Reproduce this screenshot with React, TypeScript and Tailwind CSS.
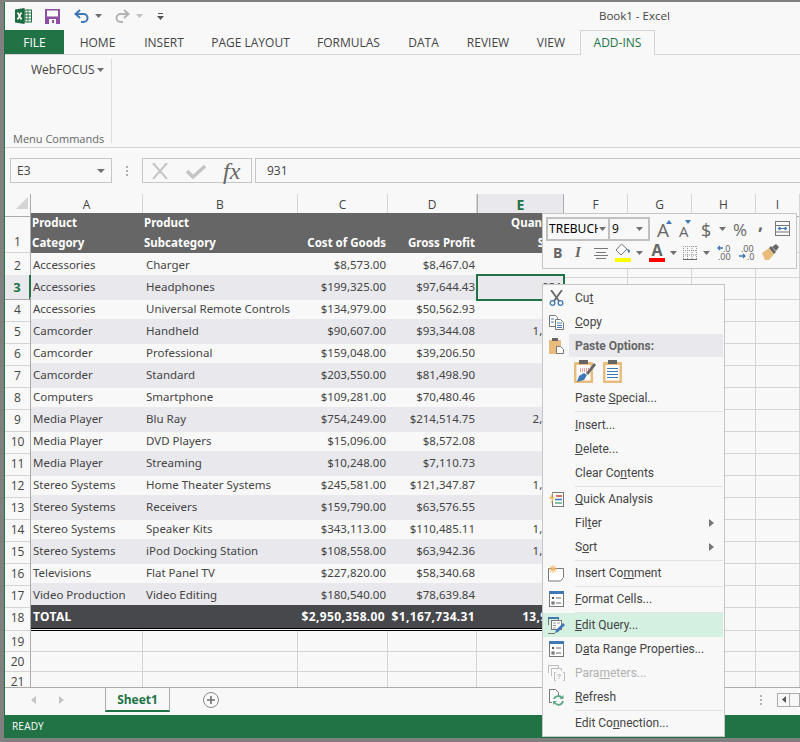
import type { ReactNode } from "react";

const rows = [
  ["Accessories", "Charger", "$8,573.00", "$8,467.04", "854"],
  ["Accessories", "Headphones", "$199,325.00", "$97,644.43", "931"],
  ["Accessories", "Universal Remote Controls", "$134,979.00", "$50,562.93", "768"],
  ["Camcorder", "Handheld", "$90,607.00", "$93,344.08", "1,204"],
  ["Camcorder", "Professional", "$159,048.00", "$39,206.50", "612"],
  ["Camcorder", "Standard", "$203,550.00", "$81,498.90", "845"],
  ["Computers", "Smartphone", "$109,281.00", "$70,480.46", "590"],
  ["Media Player", "Blu Ray", "$754,249.00", "$214,514.75", "2,105"],
  ["Media Player", "DVD Players", "$15,096.00", "$8,572.08", "206"],
  ["Media Player", "Streaming", "$10,248.00", "$7,110.73", "142"],
  ["Stereo Systems", "Home Theater Systems", "$245,581.00", "$121,347.87", "1,032"],
  ["Stereo Systems", "Receivers", "$159,790.00", "$63,576.55", "718"],
  ["Stereo Systems", "Speaker Kits", "$343,113.00", "$110,485.11", "1,127"],
  ["Stereo Systems", "iPod Docking Station", "$108,558.00", "$63,942.36", "1,063"],
  ["Televisions", "Flat Panel TV", "$227,820.00", "$58,340.68", "404"],
  ["Video Production", "Video Editing", "$180,540.00", "$78,639.84", "376"],
];

const COLS = "grid grid-cols-[26px_112px_155px_90px_89px_87px_64px_64px_64px_1fr]";

function Caret({ className = "" }: { className?: string }) {
  return (
    <svg width="7" height="4" viewBox="0 0 7 4" className={className}>
      <path d="M0 0h7L3.500 4z" fill="#707070" />
    </svg>
  );
}

function TitleBar() {
  return (
    <div className="flex h-[28px] items-center">
      <div className="flex w-[594px] items-center">
        <svg width="17" height="16" viewBox="0 0 17 16" className="ml-[10px]">
          <rect x="7" y="2" width="9.500" height="12" fill="#fff" stroke="#217346" />
          <path d="M10 2v12M13 2v12M7 5h9M7 8h9M7 11h9" stroke="#217346" />
          <path d="M0 1.500 9.500 0v16L0 14.500z" fill="#1d6b40" />
          <path d="M2.500 4.500 6.500 11.500M6.500 4.500 2.500 11.500" stroke="#fff" strokeWidth="1.600" />
        </svg>
        <svg width="15" height="15" viewBox="0 0 15 15" className="ml-[13px]">
          <rect width="15" height="15" fill="#8d4ea3" />
          <rect x="2" y="1.500" width="11" height="6" fill="#f8f8f8" />
          <rect x="4" y="10" width="7" height="5" fill="#f8f8f8" />
          <rect x="7" y="11" width="2" height="3" fill="#8d4ea3" />
        </svg>
        <svg width="15" height="14" viewBox="0 0 15 14" className="ml-[14px]">
          <path d="M6 1 1.500 5 6 9M2 5h7.500a4 4 0 0 1 0 8H7" fill="none" stroke="#3f78b5" strokeWidth="2" />
        </svg>
        <Caret className="ml-[6px]" />
        <svg width="15" height="14" viewBox="0 0 15 14" className="ml-[13px]">
          <path d="M9 1l4.500 4L9 9M13 5H5.500a4 4 0 0 0 0 8H8" fill="none" stroke="#b4b4b4" strokeWidth="2" />
        </svg>
        <svg width="7" height="4" viewBox="0 0 7 4" className="ml-[6px]">
          <path d="M0 0h7L3.500 4z" fill="#c0c0c0" />
        </svg>
        <svg width="7" height="7" viewBox="0 0 7 7" className="ml-[14px]">
          <path d="M1 .5h5" stroke="#555" />
          <path d="M0 3h7L3.500 7z" fill="#555" />
        </svg>
      </div>
      <span className="text-[11.5px] text-[#444]">Book1 - Excel</span>
    </div>
  );
}

function Tabs() {
  const tabs: [string, string][] = [
    ["HOME", "w-[67px]"],
    ["INSERT", "w-[66px]"],
    ["PAGE LAYOUT", "w-[107px]"],
    ["FORMULAS", "w-[89px]"],
    ["DATA", "w-[61px]"],
    ["REVIEW", "w-[68px]"],
    ["VIEW", "w-[58px]"],
  ];
  return (
    <div className="flex h-[25px] border-b border-[#d4d4d4] text-[12px] text-[#444]">
      <div className="flex h-[24px] w-[59px] items-center justify-center bg-[#217346] pt-[1px] text-white">FILE</div>
      {tabs.map(([t, w]) => (
        <div key={t} className={`flex h-[24px] items-center justify-center pt-[1px] ${w}`}>
          {t}
        </div>
      ))}
      <div className="flex h-[25px] w-[75px] items-center justify-center border-x border-t border-[#d4d4d4] bg-[#f8f8f8] text-[#217346]">
        ADD-INS
      </div>
    </div>
  );
}

function Ribbon() {
  return (
    <div className="flex h-[93px] border-b border-[#d4d4d4] py-[4px]">
      <div className="flex w-[107px] flex-col border-r border-[#dcdcdc]">
        <div className="flex items-center pl-[26px] pt-[2px] text-[12px] text-[#444]">
          WebFOCUS
          <Caret className="ml-[2px]" />
        </div>
        <div className="mt-auto -mb-[4px] pl-[8px] text-[11px] text-[#666]">Menu Commands</div>
      </div>
    </div>
  );
}

function FormulaBar() {
  return (
    <div className="flex h-[46px] pb-[11px] pt-[10px] text-[12px] text-[#444]">
      <div className="ml-[5px] flex w-[102px] items-center justify-between border border-[#c6c6c6] pl-[6px] pr-[6px]">
        E3
        <svg width="8" height="4" viewBox="0 0 8 4">
          <path d="M0 0h8L4 4z" fill="#707070" />
        </svg>
      </div>
      <div className="ml-[14px] mr-[14px] flex flex-col justify-center gap-[2px]">
        <div className="h-[2px] w-[2px] bg-[#b0b0b0]" />
        <div className="h-[2px] w-[2px] bg-[#b0b0b0]" />
        <div className="h-[2px] w-[2px] bg-[#b0b0b0]" />
      </div>
      <div className="flex w-[110px] items-center border border-[#c6c6c6] pl-[8px]">
        <svg width="18" height="16" viewBox="0 0 18 16">
          <path d="M2 0 16 16M16 0 2 16" stroke="#c4c4c4" strokeWidth="2" />
        </svg>
        <svg width="20" height="16" viewBox="0 0 20 16" className="ml-[17px]">
          <path d="M1 8l6 6L19 3" fill="none" stroke="#c4c4c4" strokeWidth="3.400" />
        </svg>
        <span className="ml-[17px] font-['Liberation_Serif',serif] text-[24px] italic leading-none text-[#666]">fx</span>
      </div>
      <div className="ml-[3px] flex flex-1 items-center border border-r-0 border-[#c6c6c6] pl-[11px]">931</div>
    </div>
  );
}

function ColumnHeaders() {
  const labels = ["A", "B", "C", "D", "E", "F", "G", "H", "I"];
  return (
    <div className={`${COLS} h-[19px] font-['Open_Sans',sans-serif] text-[12px] text-[#444]`}>
      <div className="flex border-b border-r border-[#ababab] pl-[11px] pt-[3px]">
        <svg width="12" height="12" viewBox="0 0 12 12">
          <path d="M12 0v12H0z" fill="#d4d4d4" />
        </svg>
      </div>
      {labels.map((l) =>
        l === "E" ? (
          <div
            key={l}
            className="flex items-center justify-center border-x border-b-2 border-x-[#ababab] border-b-[#217346] bg-[#e8e8ed] text-[14px] font-bold text-[#217346]"
          >
            {l}
          </div>
        ) : (
          <div key={l} className="flex items-center justify-center border-b border-r border-b-[#ababab] border-r-[#d4d4d4]">
            {l}
          </div>
        )
      )}
    </div>
  );
}

function RowNum({ n, selected, tall }: { n: number; selected?: boolean; tall?: boolean }) {
  return (
    <div
      className={
        selected
          ? "flex items-center justify-center border-b border-r-2 border-b-[#ababab] border-r-[#217346] bg-[#e8e8ed] pt-[1px] font-['Open_Sans',sans-serif] text-[13px] font-bold text-[#217346]"
          : `flex justify-center border-b border-r border-b-[#d4d4d4] border-r-[#ababab] font-['Open_Sans',sans-serif] text-[12px] text-[#444] ${
              tall ? "items-end pb-[1px]" : "items-center pt-[1px]"
            }`
      }
    >
      {n}
    </div>
  );
}

function GridCells({ n = 4 }: { n?: number }) {
  return (
    <>
      {Array.from({ length: n }).map((_, i) => (
        <div key={i} className="border-b border-r border-[#d4d4d4]" />
      ))}
    </>
  );
}

function Sheet() {
  return (
    <div className="h-[493px] overflow-hidden font-['Noto_Sans',sans-serif] text-[11.5px]">
      <ColumnHeaders />
      <div className={`${COLS} h-[40px]`}>
        <RowNum n={1} tall />
        <div className="col-span-5 grid grid-cols-[112px_155px_90px_89px_87px] bg-[#666] font-bold leading-[20px] text-white">
          <div className="pl-[1px]">Product<br />Category</div>
          <div className="pl-[1px]">Product<br />Subcategory</div>
          <div className="pr-[2px] pt-[20px] text-right">Cost of Goods</div>
          <div className="pr-[2px] pt-[20px] text-right">Gross Profit</div>
          <div className="pr-[2px] text-right">Quantity<br />Sold</div>
        </div>
        <GridCells />
      </div>
      {rows.map((r, i) => (
        <div key={i} className={`${COLS} h-[22px] leading-[23px] text-[#444]`}>
          <RowNum n={i + 2} selected={i === 1} />
          <div className={`pl-[2px] ${i % 2 ? "bg-[#e8e8ed]" : ""}`}>{r[0]}</div>
          <div className={`whitespace-nowrap pl-[3px] ${i % 2 ? "bg-[#e8e8ed]" : ""}`}>{r[1]}</div>
          <div className={`pr-[2px] text-right ${i % 2 ? "bg-[#e8e8ed]" : ""}`}>{r[2]}</div>
          <div className={`pr-[2px] text-right ${i % 2 ? "bg-[#e8e8ed]" : ""}`}>{r[3]}</div>
          <div
            className={`pr-[2px] text-right ${i % 2 ? "bg-[#e8e8ed]" : ""} ${
              i === 1 ? "outline-2 -outline-offset-1 outline-[#217346] shadow-[inset_0_0_0_1px_#f8f8f8]" : ""
            }`}
          >
            {r[4]}
          </div>
          <GridCells />
        </div>
      ))}
      <div className={`${COLS} h-[26px]`}>
        <RowNum n={18} />
        <div className="col-span-5 border-b border-black pb-[1px]">
          <div className="h-[24px] border-b border-black">
            <div className="grid h-[23px] grid-cols-[112px_155px_90px_89px_87px] bg-[#47484c] text-[12px] font-bold leading-[24px] tracking-[0.35px] text-white">
              <div className="pl-[2px]">TOTAL</div>
              <div />
              <div className="whitespace-nowrap pr-[3px] text-right">$2,950,358.00</div>
              <div className="whitespace-nowrap pr-[2px] text-right">$1,167,734.31</div>
              <div className="pr-[2px] text-right">13,917</div>
            </div>
          </div>
        </div>
        <GridCells />
      </div>
      {[
        [19, "h-[21px]"],
        [20, "h-[20px]"],
        [21, "h-[20px]"],
      ].map(([n, h]) => (
        <div key={n} className={`${COLS} ${h}`}>
          <RowNum n={n as number} />
          <GridCells n={9} />
        </div>
      ))}
    </div>
  );
}

function TabBar() {
  return (
    <div className="flex h-[28px] border-t border-[#ababab]">
      <div className="flex w-[100px] items-center pb-[4px] pl-[26px]">
        <svg width="5" height="8" viewBox="0 0 5 8">
          <path d="M5 0v8L0 4z" fill="#c4c4c4" />
        </svg>
        <svg width="5" height="8" viewBox="0 0 5 8" className="ml-[23px]">
          <path d="M0 0v8l5-4z" fill="#c4c4c4" />
        </svg>
      </div>
      <div className="flex h-[24px] w-[65px] items-center justify-center border-x border-b-2 border-x-[#ababab] border-b-[#217346] pt-[1px] text-[12px] font-bold text-[#217346]">
        Sheet1
      </div>
      <div className="ml-[33px] flex items-center pb-[4px]">
        <svg width="16" height="16" viewBox="0 0 16 16">
          <circle cx="8" cy="8" r="7.500" fill="none" stroke="#8a8a8a" />
          <path d="M8 4v8M4 8h8" stroke="#707070" strokeWidth="1.600" />
        </svg>
      </div>
      <div className="ml-auto flex items-center gap-[15px] pb-[4px]">
        <div className="flex flex-col gap-[2px]">
          <div className="h-[2px] w-[2px] bg-[#b0b0b0]" />
          <div className="h-[2px] w-[2px] bg-[#b0b0b0]" />
          <div className="h-[2px] w-[2px] bg-[#b0b0b0]" />
        </div>
        <div className="flex h-[14px] w-[23px] border border-[#ababab]">
          <div className="flex w-[12px] items-center justify-center border-r border-[#ababab]">
            <svg width="4" height="7" viewBox="0 0 4 7">
              <path d="M4 0v7L0 3.500z" fill="#555" />
            </svg>
          </div>
        </div>
      </div>
    </div>
  );
}

function StatusBar() {
  return (
    <div className="flex h-[23px] items-center bg-[#217346] pl-[7px] text-[10px] tracking-[0.2px] text-white">READY</div>
  );
}

function MiniToolbar() {
  return (
    <div className="absolute left-[542px] top-[213px] flex h-[56px] w-[255px] flex-col border border-[#c6c6c6] bg-[#f8f8f8] text-[#666]">
      <div className="flex h-[27px] items-end">
        <div className="ml-[3px] flex h-[24px] w-[64px] items-center border-2 border-[#c0c0c0] pl-[1px] font-['Noto_Sans',sans-serif] text-[12px] text-black">
          <span className="w-[49px] overflow-hidden whitespace-nowrap">TREBUCHET</span>
          <Caret className="ml-[1px]" />
        </div>
        <div className="flex h-[24px] w-[40px] items-center justify-between border-2 border-l-0 border-[#c0c0c0] pl-[2px] pr-[5px] text-[12px] text-black">
          9
          <Caret />
        </div>
        <div className="relative ml-[7px] h-[24px] w-[15px] text-[19px] leading-[26px]">
          A
          <svg width="6" height="4" viewBox="0 0 6 4" className="absolute left-[9px] top-[3px]">
            <path d="M3 0l3 4H0z" fill="#3f78b5" />
          </svg>
        </div>
        <div className="relative ml-[7px] h-[24px] w-[13px] text-[15px] leading-[28px]">
          A
          <svg width="6" height="4" viewBox="0 0 6 4" className="absolute left-[6px] top-[3px]">
            <path d="M0 0h6L3 4z" fill="#3f78b5" />
          </svg>
        </div>
        <div className="ml-[9px] h-[24px] w-[12px] text-[18px] leading-[26px]">$</div>
        <Caret className="mb-[10px] ml-[6px]" />
        <div className="ml-[7px] h-[24px] w-[14px] text-[17px] leading-[26px]">%</div>
        <div className="ml-[11px] h-[24px] w-[5px] text-[18px] font-bold leading-[13px]">,</div>
        <svg width="15" height="15" viewBox="0 0 15 15" className="mb-[5px] ml-[12px]">
          <rect x=".5" y=".5" width="14" height="14" fill="none" stroke="#777" />
          <path d="M1 4.500h13M1 11h13" stroke="#777" />
          <path d="M3 7.500h9M3 7.500l2-1.500v3zM12 7.500l-2-1.500v3z" stroke="#3f78b5" fill="#3f78b5" />
        </svg>
      </div>
      <div className="flex h-[27px] items-center pb-[4px]">
        <span className="ml-[10px] w-[9px] text-[14px] font-bold">B</span>
        <span className="ml-[13px] w-[8px] font-['Liberation_Serif',serif] text-[15px] font-bold italic">I</span>
        <svg width="14" height="12" viewBox="0 0 14 12" className="ml-[11px]">
          <path d="M0 1.500h14M2 5.500h10M0 8.500h14M2 11.500h10" stroke="#777" />
        </svg>
        <svg width="16" height="19" viewBox="0 0 16 19" className="ml-[7px]">
          <path d="M6.500 1 1 7l5 5 6-6z" fill="#fff" stroke="#777" />
          <path d="M12 6c2 0 3 1 3 3l-1.500 1z" fill="#3f78b5" />
          <rect y="15" width="16" height="4" fill="#ffff00" />
        </svg>
        <Caret className="ml-[5px]" />
        <div className="ml-[6px] flex w-[16px] flex-col items-center">
          <span className="h-[14px] text-[16px] font-bold leading-[15px]">A</span>
          <div className="mt-[1px] h-[4px] w-[16px] bg-[#f00]" />
        </div>
        <Caret className="ml-[5px]" />
        <svg width="14" height="14" viewBox="0 0 14 14" className="ml-[6px]">
          <path d="M.5 0v13M4.500 0v13M9 0v13M13.500 0v13M0 .5h14M0 4.500h14M0 9h14" stroke="#999" strokeDasharray="1 1" />
          <path d="M0 13.500h14" stroke="#666" />
        </svg>
        <Caret className="ml-[6px]" />
        <svg width="16" height="15" viewBox="0 0 16 15" className="ml-[7px]">
          <path d="M6 3H1M3 1 1 3l2 2" fill="none" stroke="#3f78b5" strokeWidth="1.300" />
          <text x="6" y="6.500" fontSize="9" fill="#555">.0</text>
          <text x="1" y="14.500" fontSize="9" fill="#555">.00</text>
        </svg>
        <svg width="16" height="15" viewBox="0 0 16 15" className="ml-[6px]">
          <text x="2" y="6.500" fontSize="9" fill="#555">.00</text>
          <path d="M0 11h6M4 9l2 2-2 2" fill="none" stroke="#3f78b5" strokeWidth="1.300" />
          <text x="8" y="14.500" fontSize="9" fill="#555">.0</text>
        </svg>
        <svg width="17" height="17" viewBox="0 0 17 17" className="ml-[7px]">
          <path d="M0 9 7 4l5 6-5 6H3z" fill="#e8bd7c" />
          <path d="M7 4l5 6 2-2-5-6z" fill="#666" />
          <path d="M10 3l4-3 3 3-3 4z" fill="#666" />
        </svg>
      </div>
    </div>
  );
}

function MenuItem({
  icon,
  children,
  active,
  disabled,
  arrow,
}: {
  icon?: ReactNode;
  children: ReactNode;
  active?: boolean;
  disabled?: boolean;
  arrow?: boolean;
}) {
  return (
    <div className={`flex h-[24px] items-center ${active ? "bg-[#d3f0e0]" : ""} ${disabled ? "text-[#b1b1b1]" : "text-[#444]"}`}>
      <div className="flex w-[32px] justify-center pr-[6px]">{icon}</div>
      <span className="whitespace-nowrap">{children}</span>
      {arrow && (
        <svg width="5" height="8" viewBox="0 0 5 8" className="ml-auto mr-[9px]">
          <path d="M0 0v8l5-4z" fill="#777" />
        </svg>
      )}
    </div>
  );
}

function Sep({ h = "h-[2px]" }: { h?: string }) {
  return (
    <div className={`ml-[32px] flex items-center ${h}`}>
      <div className="h-px flex-1 bg-[#e2e2e2]" />
    </div>
  );
}

function ClipBoard({ className = "", lines }: { className?: string; lines?: boolean }) {
  return (
    <svg width="19" height="23" viewBox="0 0 19 23" className={className}>
      <rect x="0" y="2" width="19" height="21" rx="1" fill="#e8bd7c" />
      <rect x="2.500" y="5" width="14" height="15.500" fill="#fff" />
      <rect x="5" y="0" width="9" height="4" fill="#666" />
      {lines && <path d="M4 8.500h11M4 11.500h11M4 14.500h11M4 17.500h11" stroke="#3f78b5" />}
    </svg>
  );
}

function FormatIcon() {
  return (
    <svg width="15" height="16" viewBox="0 0 15 16">
      <rect x=".5" y=".5" width="14" height="15" fill="#fff" stroke="#777" />
      <rect width="15" height="3" fill="#3f78b5" />
      <rect x="3" y="6" width="2" height="2" fill="#555" />
      <rect x="3" y="11" width="2" height="2" stroke="#555" fill="none" />
      <path d="M7 7h5M7 12h5" stroke="#666" />
    </svg>
  );
}

function ContextMenu() {
  return (
    <div className="absolute left-[542px] top-[284px] h-[453px] w-[183px] border border-[#c6c6c6] bg-[#f8f8f8] pr-[1px] pt-[1px] font-['Roboto',sans-serif] text-[12px]">
      <MenuItem
        icon={
          <svg width="15" height="16" viewBox="0 0 15 16">
            <path d="M2 0l8 11M13 0 5 11" stroke="#666" strokeWidth="1.800" />
            <circle cx="3.500" cy="13" r="2.300" fill="none" stroke="#3f78b5" strokeWidth="1.300" />
            <circle cx="11.500" cy="13" r="2.300" fill="none" stroke="#3f78b5" strokeWidth="1.300" />
          </svg>
        }
      >
        Cu<u>t</u>
      </MenuItem>
      <MenuItem
        icon={
          <svg width="15" height="15" viewBox="0 0 15 15">
            <path d="M.5.5h6l2 2v9h-8z" fill="#fff" stroke="#777" />
            <path d="M6.500 4.500h5l3 3v7h-8z" fill="#fff" stroke="#777" />
            <path d="M2 4h3M2 7h3M8 8h5M8 10.500h5M8 12.500h5" stroke="#3f78b5" />
          </svg>
        }
      >
        <u>C</u>opy
      </MenuItem>
      <div className="flex h-[23px] items-center">
        <div className="flex w-[26px] justify-center pl-[1px]">
          <svg width="15" height="16" viewBox="0 0 15 16">
            <rect y="2" width="12" height="14" fill="#e8bd7c" />
            <rect x="3" y="0" width="6" height="3" fill="#666" />
            <path d="M7.500 8.500h4l3 3v4h-7z" fill="#fff" stroke="#777" />
          </svg>
        </div>
        <div className="flex h-full flex-1 items-center bg-[#e8e8ed] pl-[6px] font-bold text-[#666]">Paste Options:</div>
      </div>
      <div className="flex h-[29px] items-center pl-[31px]">
        <div className="relative h-[23px] w-[24px]">
          <ClipBoard className="absolute left-0 top-0" />
          <svg width="22" height="22" viewBox="0 0 22 22" className="absolute left-[1px] top-[1px]">
            <path d="M5 8h9M5 10h9" stroke="#d04a3a" strokeDasharray="1 1" />
            <path d="M2 21l7-2 3-5-3-2-5 3z" fill="#3f78b5" />
            <path d="M11 12l8-10 2 2-8 10z" fill="#666" />
          </svg>
        </div>
        <ClipBoard className="ml-[5px]" lines />
      </div>
      <MenuItem>
        Paste <u>S</u>pecial...
      </MenuItem>
      <Sep h="h-[3px]" />
      <MenuItem>
        <u>I</u>nsert...
      </MenuItem>
      <MenuItem>
        <u>D</u>elete...
      </MenuItem>
      <MenuItem>
        Clear Co<u>n</u>tents
      </MenuItem>
      <Sep />
      <MenuItem
        icon={
          <svg width="15" height="15" viewBox="0 0 15 15">
            <rect x="3.500" y=".5" width="11" height="14" fill="#fff" stroke="#777" />
            <path d="M7 4h6" stroke="#d04a3a" strokeWidth="1.600" />
            <path d="M6 7.500h7" stroke="#3f78b5" strokeWidth="1.600" />
            <path d="M6 11h7" stroke="#6fae8c" strokeWidth="1.600" />
            <path d="M4 0 0 7h3L1 13l5-8H3z" fill="#f0c16a" />
          </svg>
        }
      >
        <u>Q</u>uick Analysis
      </MenuItem>
      <MenuItem arrow>
        Fil<u>t</u>er
      </MenuItem>
      <MenuItem arrow>
        S<u>o</u>rt
      </MenuItem>
      <Sep />
      <MenuItem
        icon={
          <svg width="16" height="17" viewBox="0 0 16 17">
            <path d="M.5 3.500h15v9l-3 3.500H.5z" fill="#fff" stroke="#777" />
            <path d="M5 0v8M1 4h8M2 1l6 6M8 1 2 7" stroke="#f2b65c" />
            <circle cx="5" cy="4" r="1.800" fill="#f2b65c" />
          </svg>
        }
      >
        Insert Co<u>m</u>ment
      </MenuItem>
      <Sep />
      <MenuItem icon={<FormatIcon />}>
        <u>F</u>ormat Cells...
      </MenuItem>
      <Sep />
      <MenuItem
        active
        icon={
          <svg width="17" height="17" viewBox="0 0 17 17">
            <path d="M.5 8V.5h10v3" fill="none" stroke="#777" />
            <rect width="11" height="2" fill="#3f78b5" />
            <rect x="3.500" y="3.500" width="10" height="9" fill="#fff" stroke="#777" />
            <path d="M5 6h3M9 6h3M5 8.500h3M5 11h3" stroke="#999" />
            <path d="M7 16l1-3 7-7 2 2-7 7z" fill="#3f78b5" />
            <path d="M0 16.500h7" stroke="#777" />
          </svg>
        }
      >
        <u>E</u>dit Query...
      </MenuItem>
      <MenuItem icon={<FormatIcon />}>
        D<u>a</u>ta Range Properties...
      </MenuItem>
      <MenuItem
        disabled
        icon={
          <svg width="17" height="16" viewBox="0 0 17 16">
            <path d="M.5 8V.5h10v3M3.500 11V3.500h10V6" fill="none" stroke="#bdbdbd" />
            <path d="M8 7.500H6.500v8H8M15 7.500h1.500v8H15" fill="none" stroke="#bdbdbd" />
            <text x="9" y="14" fontSize="8" fontWeight="bold" fill="#bdbdbd">?</text>
          </svg>
        }
      >
        Para<u>m</u>eters...
      </MenuItem>
      <MenuItem
        icon={
          <svg width="15" height="17" viewBox="0 0 15 17">
            <path d="M.5.5h6l3 3V7M.5.5v13H3" fill="none" stroke="#777" />
            <path d="M5 10a4.500 4.500 0 0 1 8-1M14 12a4.500 4.500 0 0 1-8 2" fill="none" stroke="#5ea884" strokeWidth="1.800" />
            <path d="M14.500 6v4h-4zM4 16v-4h4z" fill="#5ea884" />
          </svg>
        }
      >
        <u>R</u>efresh
      </MenuItem>
      <Sep />
      <MenuItem>
        Edit Co<u>n</u>nection...
      </MenuItem>
    </div>
  );
}

export default function App() {
  return (
    <div className="relative h-[742px] w-[800px] overflow-hidden bg-[#808080] pb-[4px] pl-[4px] pt-[2px] font-['Open_Sans',sans-serif]">
      <div className="flex h-full flex-col border-l border-[#217346] bg-[#f8f8f8]">
        <TitleBar />
        <Tabs />
        <Ribbon />
        <FormulaBar />
        <Sheet />
        <TabBar />
        <StatusBar />
      </div>
      <MiniToolbar />
      <ContextMenu />
    </div>
  );
}
